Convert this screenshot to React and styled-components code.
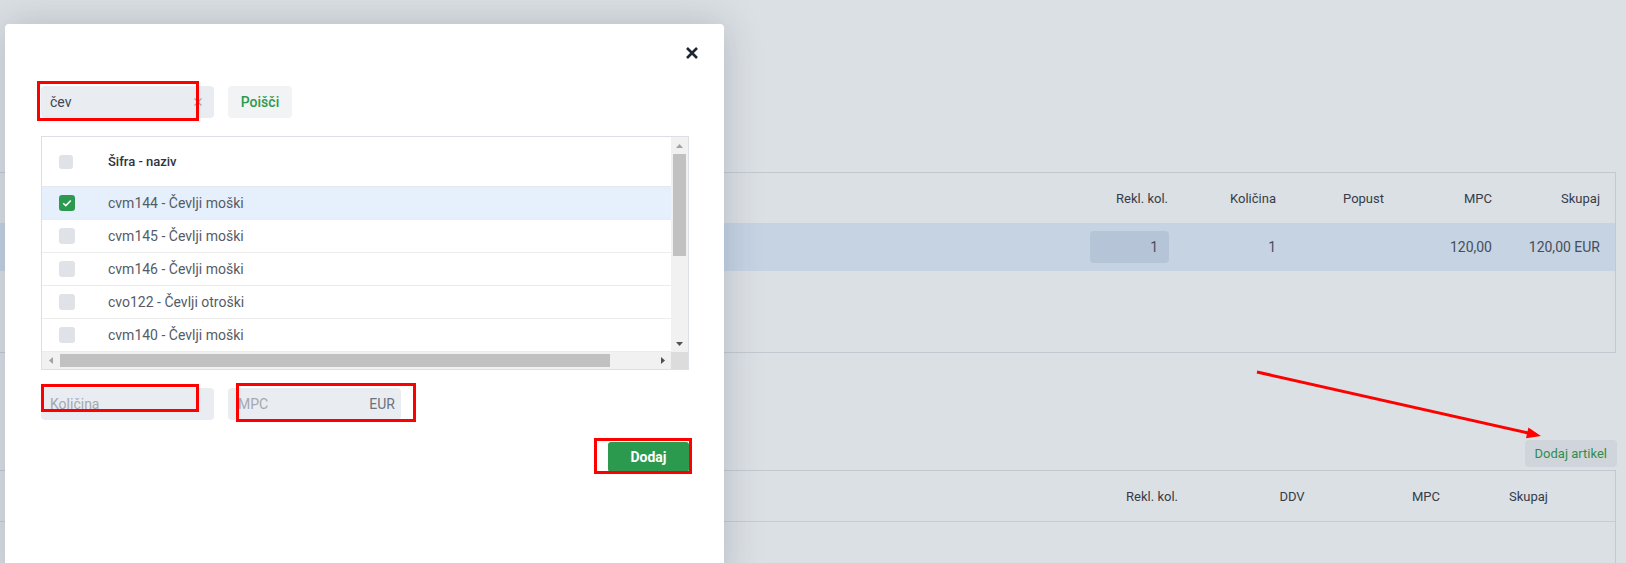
import React from 'react';
import styled, { createGlobalStyle } from 'styled-components';

const GlobalStyle = createGlobalStyle`
  html, body { margin: 0; padding: 0; }
  body {
    width: 1626px;
    height: 563px;
    overflow: hidden;
    background: #dbe0e4;
    font-family: Roboto, "Noto Sans", Arial, sans-serif;
    color: #3b4250;
  }
  * { box-sizing: border-box; }
`;

const Screen = styled.div`
  position: relative;
  width: 1626px;
  height: 563px;
  overflow: hidden;
`;

/* ---------- background page ---------- */
const Page = styled.main`
  display: flex;
  flex-direction: column;
  padding: 172px 10px 0 0;
`;

const Card = styled.section`
  margin-left: -1px;
  border: 1px solid #c3c9d0;
  height: ${(p) => p.$h}px;
  display: flex;
  flex-direction: column;
`;

const GridRow = styled.div`
  display: grid;
  grid-template-columns: ${(p) => p.$cols};
  align-items: center;
  height: ${(p) => p.$h}px;
  background: ${(p) => p.$bg || 'transparent'};
  border-bottom: ${(p) => (p.$line ? '1px solid #c6ccd3' : 'none')};
`;

const HeadCell = styled.div`
  font-size: 13px;
  font-weight: 400;
  color: #353c49;
  text-align: ${(p) => p.$align || 'right'};
  padding: ${(p) => p.$pad || '0 15px 0 0'};
  white-space: nowrap;
`;

const ValueCell = styled.div`
  font-size: 14px;
  color: #474e5b;
  text-align: right;
  padding-right: 15px;
  white-space: nowrap;
  display: flex;
  justify-content: flex-end;
`;

const QtyBox = styled.div`
  width: 79px;
  height: 32px;
  border-radius: 4px;
  background: #b5c4d6;
  display: flex;
  align-items: center;
  justify-content: flex-end;
  padding-right: 11px;
  font-size: 14px;
  color: #474e5b;
  margin-right: -1px;
`;

const ActionBar = styled.div`
  display: flex;
  justify-content: flex-end;
  margin-top: 87px;
  margin-right: -1px;
`;

const GhostButton = styled.button`
  height: 27px;
  padding: 0 10px;
  border: none;
  border-radius: 4px;
  background: #cfd5db;
  color: #2f8c50;
  font-family: Roboto, sans-serif;
  font-size: 13px;
  cursor: pointer;
`;

const SecondCard = styled(Card)`
  margin-top: 3px;
`;

/* ---------- modal ---------- */
const Modal = styled.div`
  position: absolute;
  left: 5px;
  top: 24px;
  width: 719px;
  height: 560px;
  background: #ffffff;
  border-radius: 4px;
  box-shadow: 0 0 38px rgba(40, 52, 72, 0.22);
  padding: 23px 35px 0 36px;
  display: flex;
  flex-direction: column;
`;

const TopBar = styled.div`
  display: flex;
  justify-content: flex-end;
  height: 12px;
  margin-right: -9px;
`;

const CloseButton = styled.button`
  width: 12px;
  height: 12px;
  padding: 0;
  border: none;
  background: none;
  display: block;
  cursor: pointer;
`;

const FieldRow = styled.div`
  display: flex;
  gap: 14px;
  margin-top: ${(p) => p.$mt}px;
`;

const Field = styled.div`
  width: ${(p) => p.$w || 173}px;
  height: 32px;
  border-radius: 4px;
  background: #e9ecf0;
  display: flex;
  align-items: center;
  justify-content: space-between;
  padding: ${(p) => p.$pad || '0 12px 0 9px'};
  font-size: 14px;
  color: #3f4650;
`;

const Placeholder = styled.span`
  color: #a3a8b0;
`;

const Suffix = styled.span`
  color: #6b7280;
`;

const SoftButton = styled.button`
  width: 64px;
  height: 32px;
  border: none;
  border-radius: 4px;
  background: #f2f3f5;
  color: #2e9a4e;
  font-family: Roboto, sans-serif;
  font-size: 14px;
  font-weight: 500;
  cursor: pointer;
`;

/* list box with classic scrollbars */
const ListBox = styled.div`
  margin-top: 18px;
  height: 234px;
  border: 1px solid #dcdfe3;
  display: grid;
  grid-template-columns: 1fr 17px;
  grid-template-rows: 1fr 17px;
  overflow: hidden;
`;

const Viewport = styled.div`
  overflow: hidden;
  min-width: 0;
  min-height: 0;
`;

const ListInner = styled.div`
  min-width: 682px;
`;

const ScrollBar = styled.div`
  display: flex;
  flex-direction: ${(p) => (p.$vertical ? 'column' : 'row')};
  background: #f1f1f1;
`;

const ScrollArrow = styled.div`
  flex: 0 0 17px;
  width: 17px;
  height: 17px;
  display: flex;
  align-items: center;
  justify-content: center;
`;

const ScrollTrack = styled.div`
  flex: 1;
  display: flex;
  flex-direction: ${(p) => (p.$vertical ? 'column' : 'row')};
  align-items: ${(p) => (p.$vertical ? 'center' : 'stretch')};
  justify-content: ${(p) => (p.$vertical ? 'flex-start' : 'flex-start')};
  padding: ${(p) => (p.$vertical ? '0' : '2px 0')};
`;

const Thumb = styled.div`
  background: #c1c1c1;
  width: ${(p) => (p.$vertical ? '13px' : `${p.$len}px`)};
  height: ${(p) => (p.$vertical ? `${p.$len}px` : 'auto')};
  margin-left: ${(p) => (p.$vertical ? '0' : '1px')};
`;

const Corner = styled.div`
  background: #dcdcdc;
`;

const ListRow = styled.div`
  display: grid;
  grid-template-columns: 51px 1fr;
  align-items: center;
  height: ${(p) => (p.$head ? 50 : 33)}px;
  border-bottom: 1px solid ${(p) => (p.$head ? '#e6e9ec' : '#ececec')};
  background: ${(p) => (p.$selected ? '#e5f0fc' : '#ffffff')};
`;

const Check = styled.span`
  margin-left: 17px;
  width: ${(p) => p.$size}px;
  height: ${(p) => p.$size}px;
  border-radius: 3px;
  background: ${(p) => (p.$checked ? '#2b9a4f' : '#dfe2e6')};
  display: flex;
  align-items: center;
  justify-content: center;
`;

const HeadLabel = styled.span`
  padding-left: 15px;
  font-size: 13px;
  font-weight: 500;
  color: #2d3440;
`;

const ItemLabel = styled.span`
  padding-left: 15px;
  font-size: 14px;
  color: #545b67;
  white-space: nowrap;
`;

const Footer = styled.div`
  display: flex;
  justify-content: flex-end;
  margin-top: 22px;
`;

const PrimaryButton = styled.button`
  width: 81px;
  height: 30px;
  border: none;
  border-radius: 3px;
  background: #2b9a4f;
  color: #ffffff;
  font-family: Roboto, sans-serif;
  font-size: 14px;
  font-weight: 700;
  cursor: pointer;
`;

const Annotations = styled.svg`
  position: absolute;
  left: 0;
  top: 0;
  pointer-events: none;
`;

const ClearIcon = () => (
  <svg width="8" height="8" viewBox="0 0 8 8">
    <path d="M0.5 0.5 L7.5 7.5 M7.5 0.5 L0.5 7.5" stroke="#a0a6ae" strokeWidth="1.2" />
  </svg>
);

const Arrow = ({ dir, color }) => {
  const pts = {
    up: '0,4 3.5,0 7,4',
    down: '0,0 7,0 3.5,4',
    left: '4,0 4,7 0,3.5',
    right: '0,0 4,3.5 0,7',
  }[dir];
  const vertical = dir === 'up' || dir === 'down';
  return (
    <svg width={vertical ? 7 : 4} height={vertical ? 4 : 7}>
      <polygon points={pts} fill={color} />
    </svg>
  );
};

const items = [
  'cvm144 - Čevlji moški',
  'cvm145 - Čevlji moški',
  'cvm146 - Čevlji moški',
  'cvo122 - Čevlji otroški',
  'cvm140 - Čevlji moški',
  'cvm141 - Čevlji moški',
  'cvm142 - Čevlji moški',
  'cvm143 - Čevlji moški',
  'cvo120 - Čevlji otroški',
  'cvo121 - Čevlji otroški',
];

const topCols = '1fr repeat(5, 108px)';
const bottomCols = '1fr 130px 173px 128px 121px';

export default function App() {
  return (
    <Screen>
      <GlobalStyle />
      <Page>
        <Card $h={181}>
          <GridRow $cols={topCols} $h={50}>
            <HeadCell />
            <HeadCell>Rekl. kol.</HeadCell>
            <HeadCell>Količina</HeadCell>
            <HeadCell>Popust</HeadCell>
            <HeadCell>MPC</HeadCell>
            <HeadCell>Skupaj</HeadCell>
          </GridRow>
          <GridRow $cols={topCols} $h={48} $bg="#c5d3e3">
            <ValueCell />
            <ValueCell>
              <QtyBox>1</QtyBox>
            </ValueCell>
            <ValueCell>1</ValueCell>
            <ValueCell />
            <ValueCell>120,00</ValueCell>
            <ValueCell>120,00 EUR</ValueCell>
          </GridRow>
        </Card>
        <ActionBar>
          <GhostButton>Dodaj artikel</GhostButton>
        </ActionBar>
        <SecondCard $h={200}>
          <GridRow $cols={bottomCols} $h={51} $line>
            <HeadCell />
            <HeadCell>Rekl. kol.</HeadCell>
            <HeadCell $align="center" $pad="0 0 0 25px">DDV</HeadCell>
            <HeadCell $align="center" $pad="0 8px 0 0">MPC</HeadCell>
            <HeadCell $align="left" $pad="0 0 0 15px">Skupaj</HeadCell>
          </GridRow>
        </SecondCard>
      </Page>

      <Modal>
        <TopBar>
          <CloseButton aria-label="Zapri">
            <svg width="12" height="12" viewBox="0 0 12 12">
              <path d="M1 1 L11 11 M11 1 L1 11" stroke="#1f2733" strokeWidth="2.6" />
            </svg>
          </CloseButton>
        </TopBar>

        <FieldRow $mt={27}>
          <Field>
            <span>čev</span>
            <ClearIcon />
          </Field>
          <SoftButton>Poišči</SoftButton>
        </FieldRow>

        <ListBox>
          <Viewport>
            <ListInner>
              <ListRow $head>
                <Check $size={14} />
                <HeadLabel>Šifra - naziv</HeadLabel>
              </ListRow>
              {items.map((name, i) => (
                <ListRow key={name} $selected={i === 0}>
                  <Check $size={16} $checked={i === 0}>
                    {i === 0 && (
                      <svg width="10" height="8" viewBox="0 0 10 8">
                        <path d="M1.2 4.2 L3.8 6.6 L8.8 1.4" fill="none" stroke="#ffffff" strokeWidth="1.5" />
                      </svg>
                    )}
                  </Check>
                  <ItemLabel>{name}</ItemLabel>
                </ListRow>
              ))}
            </ListInner>
          </Viewport>
          <ScrollBar $vertical>
            <ScrollArrow><Arrow dir="up" color="#a3a3a3" /></ScrollArrow>
            <ScrollTrack $vertical>
              <Thumb $vertical $len={102} />
            </ScrollTrack>
            <ScrollArrow><Arrow dir="down" color="#505050" /></ScrollArrow>
          </ScrollBar>
          <ScrollBar>
            <ScrollArrow><Arrow dir="left" color="#a3a3a3" /></ScrollArrow>
            <ScrollTrack>
              <Thumb $len={550} />
            </ScrollTrack>
            <ScrollArrow><Arrow dir="right" color="#505050" /></ScrollArrow>
          </ScrollBar>
          <Corner />
        </ListBox>

        <FieldRow $mt={18}>
          <Field>
            <Placeholder>Količina</Placeholder>
          </Field>
          <Field $pad="0 6px 0 10px">
            <Placeholder>MPC</Placeholder>
            <Suffix>EUR</Suffix>
          </Field>
        </FieldRow>

        <Footer>
          <PrimaryButton>Dodaj</PrimaryButton>
        </Footer>
      </Modal>

      <Annotations width="1626" height="563" viewBox="0 0 1626 563">
        <g fill="none" stroke="#ff0000" strokeWidth="3">
          <rect x="38.5" y="82.5" width="159" height="37" />
          <rect x="42.5" y="385.5" width="155" height="25" />
          <rect x="237.5" y="384.5" width="177" height="36" />
          <rect x="595.5" y="439.5" width="95" height="33" />
          <line x1="1257" y1="372" x2="1528" y2="433" />
        </g>
        <polygon points="1541,436 1528.4,427.6 1526.0,438.2" fill="#ff0000" />
      </Annotations>
    </Screen>
  );
}
